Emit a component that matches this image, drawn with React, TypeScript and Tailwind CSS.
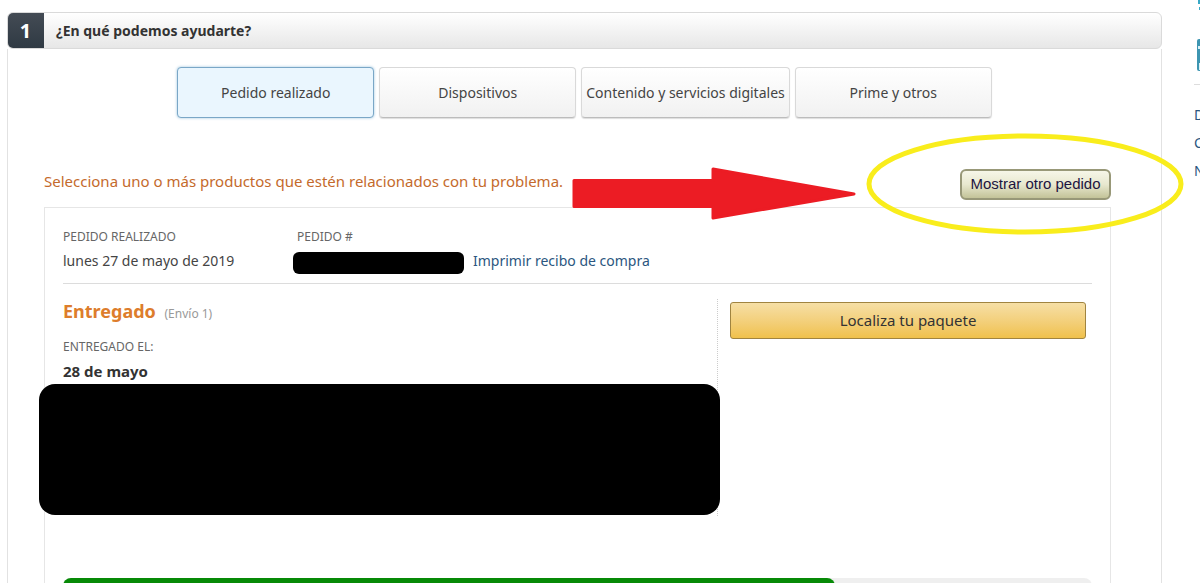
import React, { useState } from 'react';

const tabs = ['Pedido realizado', 'Dispositivos', 'Contenido y servicios digitales', 'Prime y otros'];

function StepHeader({ step, title }: { step: number; title: string }) {
  return (
    <header className="flex h-[37px] overflow-hidden rounded-md bg-linear-to-b from-white to-[#e7e7e7] border border-[#dadada]">
      <div className="-my-px -ml-px flex w-[37px] shrink-0 items-center justify-center bg-linear-to-b from-[#444c55] to-[#2f3943] text-xl font-bold text-white">
        {step}
      </div>
      <h1 className="pl-3 text-sm leading-9 font-bold text-[#333]">{title}</h1>
    </header>
  );
}

function Tabs() {
  const [active, setActive] = useState(tabs[0]);

  return (
    <div className="flex justify-center gap-[5px] pt-[18px]">
      {tabs.map((tab) => (
        <button
          key={tab}
          type="button"
          onClick={() => setActive(tab)}
          className={
            tab === active
              ? 'h-[51px] min-w-[197px] rounded border border-[#7aa7c7] bg-[#eaf6fe] px-1 text-sm whitespace-nowrap text-[#444] shadow-[0_0_3px_#9cc3dd]'
              : 'h-[51px] min-w-[197px] rounded border border-[#d9d9d9] border-b-[#bcbcbc] bg-linear-to-b from-white to-[#f1f1f1] px-1 text-sm whitespace-nowrap text-[#444] shadow-[0_1px_1px_#dddddd]'
          }
        >
          {tab}
        </button>
      ))}
    </div>
  );
}

function OrderCard() {
  return (
    <article className="relative mt-[7px] border border-[#e6e6e6] px-[18px] pt-[17px] pb-10">
      <div className="flex border-b border-[#dcdcdc] pb-[10px]">
        <div className="w-[230px]">
          <div className="text-xs leading-6 text-[#666]">PEDIDO REALIZADO</div>
          <div className="text-sm leading-6 text-[#444]">lunes 27 de mayo de 2019</div>
        </div>
        <div>
          <div className="pl-1 text-xs leading-6 text-[#666]">PEDIDO #</div>
          <div className="flex h-6 items-center gap-[9px]">
            <span className="mt-1 h-[22px] w-[171px] rounded-md bg-black" />
            <a href="#recibo" className="text-sm leading-6 text-[#2b5680]">Imprimir recibo de compra</a>
          </div>
        </div>
      </div>

      <div className="flex pt-[15px]">
        <div className="h-[217px] flex-1 border-r border-dotted border-[#ccc]">
          <h2 className="text-lg leading-6 font-bold text-[#dd7d2c]">
            Entregado <span className="ml-1 text-xs font-normal text-[#999]">(Envío 1)</span>
          </h2>
          <div className="pt-3 text-xs leading-6 text-[#666]">ENTREGADO EL:</div>
          <div className="text-[15px] leading-6 font-bold text-[#333]">28 de mayo</div>
        </div>
        <div className="w-[374px] pt-[3px] pr-1.5 pl-3">
          <button
            type="button"
            className="h-[37px] w-full rounded-[3px] border border-[#a08440] bg-linear-to-b from-[#f6dfa5] to-[#f0c14b] text-[15px] text-[#333]"
          >
            Localiza tu paquete
          </button>
        </div>
      </div>

      {/* hidden product details */}
      <div className="absolute top-44 -left-1.5 h-[131px] w-[681px] rounded-2xl bg-black" />

      <div className="mt-[62px] h-4 rounded-full bg-[#efefef]">
        <div className="h-4 w-3/4 rounded-full bg-[#078a07]" />
      </div>
    </article>
  );
}

function Sidebar() {
  return (
    <aside className="-mt-3 flex w-1.5 shrink-0 flex-col overflow-hidden">
      <svg className="h-[84px] w-10 shrink-0" viewBox="0 0 40 84" fill="none">
        <path d="M4 0h30v10H5V7h2V4H4z" fill="#39a9c6" />
        <rect x="3" y="39" width="34" height="32" rx="2" fill="#3d95b1" />
        <path d="M4 46h32v3H4zM5 63h30v7H5z" fill="#d9f0f6" />
      </svg>
      <nav className="flex flex-col border-t border-[#ddd] pt-4 text-sm leading-7 text-[#2b5680]">
        <a href="#d">D</a>
        <a href="#c">C</a>
        <a href="#n">N</a>
      </nav>
    </aside>
  );
}

export default function App() {
  return (
    <div className="flex h-screen overflow-hidden bg-white pt-3 pl-[7px] font-['Noto_Sans',sans-serif]">
      <main className="min-w-0 flex-1">
        <StepHeader step={1} title="¿En qué podemos ayudarte?" />
        <section className="border-x border-[#e2e2e2]">
          <Tabs />

          <div className="mt-[51px] pr-[50px] pl-9">
            <div className="relative flex items-start justify-between">
              <p className="text-[15px] leading-6 text-[#c46a2c]">
                Selecciona uno o más productos que estén relacionados con tu problema.
              </p>
              <button
                type="button"
                className="h-[31px] w-[151px] rounded-md border-2 border-[#989878] bg-linear-to-b from-[#f6f6e8] via-[#e8e8cf] to-[#c3c398] font-['Liberation_Sans',sans-serif] text-[15px] text-[#1c1440]"
              >
                Mostrar otro pedido
              </button>

              {/* arrow and ring pointing at the button */}
              <svg className="pointer-events-none absolute -top-1 left-[528px] z-10 h-[58px] w-[288px]" viewBox="0 0 288 58">
                <path
                  d="M2 15.500H141V4L282 29L141 53V41.500H2Z"
                  fill="#ec1c24"
                  stroke="#ec1c24"
                  strokeWidth="3"
                  strokeLinejoin="round"
                />
              </svg>
              <svg className="pointer-events-none absolute -top-9 -right-[74px] z-10 h-[102px] w-[320px]" viewBox="0 0 320 102" fill="none">
                <ellipse cx="160" cy="51" rx="156" ry="48" stroke="#f9ed1c" strokeWidth="5" />
              </svg>
            </div>

            <OrderCard />
          </div>
        </section>
      </main>
      <div className="w-8 shrink-0" />
      <Sidebar />
    </div>
  );
}
